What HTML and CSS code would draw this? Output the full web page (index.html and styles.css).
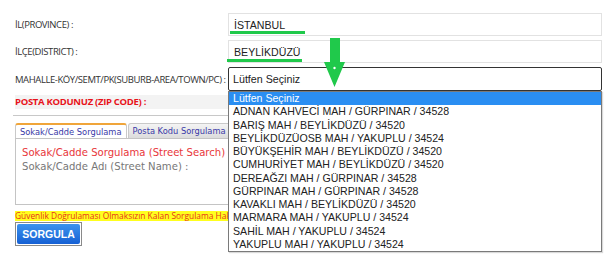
FILE: index.html
```html
<!DOCTYPE html>
<html lang="tr">
<head>
    <meta charset="UTF-8">
    <title>Posta Kodu Sorgulama</title>
    <link rel="stylesheet" href="styles.css">
</head>
<body>
    <div class="page">
        <div class="row">
            <div class="label">İL(PROVINCE) :</div>
            <div class="field"><div class="box">İSTANBUL</div></div>
        </div>
        <div class="row">
            <div class="label">İLÇE(DISTRICT) :</div>
            <div class="field"><div class="box">BEYLİKDÜZÜ</div></div>
        </div>
        <div class="row">
            <div class="label">MAHALLE-KÖY/SEMT/PK(SUBURB-AREA/TOWN/PC) :</div>
            <div class="field"><div class="select">Lütfen Seçiniz</div></div>
        </div>
        <div class="zip">POSTA KODUNUZ (ZIP CODE) :</div>
        <div class="rule"></div>

        <div class="tabs">
            <div class="tab active">Sokak/Cadde Sorgulama</div>
            <div class="tab">Posta Kodu Sorgulama</div>
        </div>
        <div class="panel">
            <div class="panel-title">Sokak/Cadde Sorgulama (Street Search)</div>
            <div class="panel-label">Sokak/Cadde Adı (Street Name) :</div>
        </div>
        <div class="notice">Güvenlik Doğrulaması Olmaksızın Kalan Sorgulama Hakkınız</div>
        <div class="btn-wrap"><div class="btn">SORGULA</div></div>

        <!-- annotations drawn over the form -->
        <div class="mark mark1"></div>
        <div class="mark mark2"></div>
        <svg class="arrow" width="24" height="52" viewBox="0 0 24 52">
            <polygon points="6,0 16,0 16,24 21,24 10.5,49 0,24 6,24" fill="#20c94b"/>
            <circle cx="10.5" cy="30" r="1.2" fill="#fff"/>
        </svg>

        <!-- open select list -->
        <div class="options">
            <div class="opt selected">Lütfen Seçiniz</div>
            <div class="opt">ADNAN KAHVECİ MAH / GÜRPINAR / 34528</div>
            <div class="opt">BARIŞ MAH / BEYLİKDÜZÜ / 34520</div>
            <div class="opt">BEYLİKDÜZÜOSB MAH / YAKUPLU / 34524</div>
            <div class="opt">BÜYÜKŞEHİR MAH / BEYLİKDÜZÜ / 34520</div>
            <div class="opt">CUMHURİYET MAH / BEYLİKDÜZÜ / 34520</div>
            <div class="opt">DEREAĞZI MAH / GÜRPINAR / 34528</div>
            <div class="opt">GÜRPINAR MAH / GÜRPINAR / 34528</div>
            <div class="opt">KAVAKLI MAH / BEYLİKDÜZÜ / 34520</div>
            <div class="opt">MARMARA MAH / YAKUPLU / 34524</div>
            <div class="opt">SAHİL MAH / YAKUPLU / 34524</div>
            <div class="opt">YAKUPLU MAH / YAKUPLU / 34524</div>
        </div>
    </div>
</body>
</html>
```

FILE: styles.css
```css
body {
    margin: 0;
    background: #fff;
    font-family: "Open Sans", "DejaVu Sans", sans-serif;
    overflow: hidden;
}
.page {
    position: relative;
    width: 605px;
    height: 257px;
    padding: 13px 3px 0 15px;
    box-sizing: border-box;
}
.row {
    display: flex;
    align-items: center;
    margin-bottom: 4px;
}
.label {
    width: 213px;
    font-size: 9.5px;
    letter-spacing: -0.42px;
    color: #333;
    white-space: nowrap;
}
.field {
    flex: 1;
}
.box {
    height: 23px;
    border: 1px solid #e2e2e2;
    box-sizing: border-box;
    padding: 0 5px;
    display: flex;
    align-items: center;
    font-family: "Liberation Sans", Arial, sans-serif;
    font-size: 10.6px;
    color: #222;
}
.select {
    height: 24px;
    border: 1px solid #333;
    border-radius: 2px;
    box-sizing: border-box;
    padding: 0 4px;
    display: flex;
    align-items: center;
    font-family: "Liberation Sans", Arial, sans-serif;
    font-size: 10.7px;
    color: #222;
}
.zip {
    margin-top: 2px;
    height: 14px;
    line-height: 14px;
    background: #f3f3f3;
    font-size: 9.5px;
    letter-spacing: -0.3px;
    font-weight: bold;
    color: #e8141b;
}
.rule {
    margin: 6px 0 0 -2px;
    border-top: 1px solid #c8c8c8;
}
.tabs {
    display: flex;
    margin-top: 7px;
    gap: 1px;
}
.tab {
    height: 15px;
    line-height: 15px;
    padding: 0 4px;
    font-family: "DejaVu Sans", Verdana, sans-serif;
    font-size: 8.3px;
    color: #3a3aa8;
    border: 1px solid #c9c9c9;
    border-bottom: none;
    border-radius: 3px 3px 0 0;
    background: linear-gradient(#f4f4f4, #dcdcdc);
    box-sizing: border-box;
}
.tab.active {
    background: #fff;
    border-top: 2px solid #f0a53a;
    line-height: 14px;
}
.panel {
    height: 67px;
    border: 1px solid #c4c4c4;
    box-sizing: border-box;
    padding: 7px 6px;
    margin-right: 12px;
    font-family: "DejaVu Sans", Verdana, sans-serif;
    font-size: 10.1px;
}
.panel-title {
    color: #e8363a;
    line-height: 14px;
}
.panel-label {
    color: #777;
    line-height: 14px;
}
.notice {
    margin-top: 6px;
    height: 10px;
    line-height: 10px;
    background: #ffff1e;
    font-size: 8.4px;
    color: #e8321a;
    white-space: nowrap;
    overflow: hidden;
}
.btn-wrap {
    display: inline-block;
    margin-top: 1px;
    border: 1px solid #8a8a8a;
    padding: 1px;
}
.btn {
    width: 63px;
    height: 20px;
    line-height: 20px;
    text-align: center;
    background: linear-gradient(#3d93ee, #1560d4);
    border-radius: 2px;
    color: #fff;
    font-family: "Liberation Sans", Arial, sans-serif;
    font-weight: bold;
    font-size: 10.5px;
}
.mark {
    position: absolute;
    height: 3px;
    background: #20c94b;
}
.mark1 { left: 230px; top: 31px; width: 75px; }
.mark2 { left: 227px; top: 59px; width: 75px; }
.arrow {
    position: absolute;
    left: 324px;
    top: 38px;
}
.options {
    position: absolute;
    left: 228px;
    top: 91px;
    width: 374px;
    height: 161px;
    border: 1px solid #7a7a7a;
    box-sizing: border-box;
    background: #fff;
    box-shadow: 1px 1px 1px rgba(0, 0, 0, 0.15);
    font-family: "Liberation Sans", Arial, sans-serif;
    font-size: 10.6px;
    color: #222;
}
.opt {
    height: 13.25px;
    line-height: 13.25px;
    padding-left: 4px;
    white-space: nowrap;
}
.opt.selected {
    background: #2a8ef2;
    color: #fff;
}
```
